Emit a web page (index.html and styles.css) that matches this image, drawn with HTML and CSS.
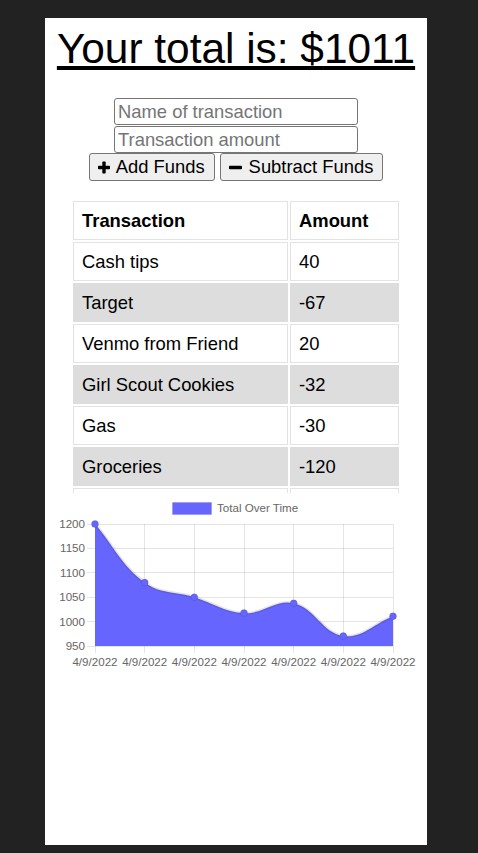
FILE: index.html
```html
<!DOCTYPE html>
<html lang="en">
<head>
<meta charset="utf-8">
<title>Budget Tracker</title>
<link rel="stylesheet" href="styles.css">
</head>
<body>
<main class="panel">
  <h1 class="total">Your total is: $<span id="total">1011</span></h1>

  <form class="form" onsubmit="return false">
    <input class="field" type="text" placeholder="Name of transaction">
    <input class="field field-amount" type="number" placeholder="Transaction amount">
    <div class="actions">
      <button class="btn" type="button">
        <svg class="icon icon-plus" viewBox="0 0 12 13" aria-hidden="true"><path d="M4.3 1.2a.8.8 0 0 1 .8-.8h1.8a.8.8 0 0 1 .8.8v3.6h3.5a.8.8 0 0 1 .8.8v1.8a.8.8 0 0 1-.8.8H7.7v3.6a.8.8 0 0 1-.8.8H5.1a.8.8 0 0 1-.8-.8V8.2H.8A.8.8 0 0 1 0 7.4V5.6a.8.8 0 0 1 .8-.8h3.5z"/></svg>
        <span>Add Funds</span>
      </button>
      <button class="btn" type="button">
        <svg class="icon icon-minus" viewBox="0 0 13 13" aria-hidden="true"><rect x="0" y="4.7" width="13" height="3.6" rx="0.8"/></svg>
        <span>Subtract Funds</span>
      </button>
    </div>
  </form>

  <div class="table-wrap">
    <table class="ledger">
      <thead>
        <tr><th class="col-name">Transaction</th><th>Amount</th></tr>
      </thead>
      <tbody>
        <tr><td>Cash tips</td><td>40</td></tr>
        <tr><td>Target</td><td>-67</td></tr>
        <tr><td>Venmo from Friend</td><td>20</td></tr>
        <tr><td>Girl Scout Cookies</td><td>-32</td></tr>
        <tr><td>Gas</td><td>-30</td></tr>
        <tr><td>Groceries</td><td>-120</td></tr>
        <tr><td>&nbsp;</td><td>&nbsp;</td></tr>
      </tbody>
    </table>
  </div>

  <svg class="chart" width="382" height="190" viewBox="45 493 382 190" aria-label="Total Over Time chart">
    <g class="legend">
      <rect x="172.5" y="502.5" width="39" height="12" fill="#6666ff" stroke="rgba(0,0,0,0.1)"/>
      <text x="217" y="511.5" class="chart-text">Total Over Time</text>
    </g>
    <g class="grid" stroke="rgba(0,0,0,0.1)" stroke-width="1" shape-rendering="crispEdges">
      <line x1="87" y1="524.5" x2="393" y2="524.5"/>
      <line x1="87" y1="548.5" x2="393" y2="548.5"/>
      <line x1="87" y1="572.5" x2="393" y2="572.5"/>
      <line x1="87" y1="597.5" x2="393" y2="597.5"/>
      <line x1="87" y1="621.5" x2="393" y2="621.5"/>
      <line x1="87" y1="646.5" x2="393" y2="646.5"/>
      <line x1="95.5" y1="524" x2="95.5" y2="653"/>
      <line x1="144.5" y1="524" x2="144.5" y2="653"/>
      <line x1="194.5" y1="524" x2="194.5" y2="653"/>
      <line x1="244.5" y1="524" x2="244.5" y2="653"/>
      <line x1="293.5" y1="524" x2="293.5" y2="653"/>
      <line x1="343.5" y1="524" x2="343.5" y2="653"/>
      <line x1="393.5" y1="524" x2="393.5" y2="653"/>
    </g>
    <path class="area" d="M95,524 C114.9,547.4 121.0,565.1 144.7,582.6 C160.7,594.4 174.5,591.1 194.3,597.2 C214.3,603.4 223.8,612.0 244,613.1 C263.6,614.3 275.4,599.1 293.7,603.3 C315.1,608.2 322.4,633.3 343.3,636 C362.2,638.5 373.1,624.2 393,616.2 L393,646 L95,646 Z" fill="#6666ff"/>
    <path class="line" d="M95,524 C114.9,547.4 121.0,565.1 144.7,582.6 C160.7,594.4 174.5,591.1 194.3,597.2 C214.3,603.4 223.8,612.0 244,613.1 C263.6,614.3 275.4,599.1 293.7,603.3 C315.1,608.2 322.4,633.3 343.3,636 C362.2,638.5 373.1,624.2 393,616.2" fill="none" stroke="rgba(0,0,0,0.1)" stroke-width="3"/>
    <g class="points" fill="#6666ff" stroke="rgba(0,0,0,0.1)" stroke-width="1">
      <circle cx="95" cy="524" r="3.5"/>
      <circle cx="144.7" cy="582.6" r="3.5"/>
      <circle cx="194.3" cy="597.2" r="3.5"/>
      <circle cx="244" cy="613.1" r="3.5"/>
      <circle cx="293.7" cy="603.3" r="3.5"/>
      <circle cx="343.3" cy="636" r="3.5"/>
      <circle cx="393" cy="616.2" r="3.5"/>
    </g>
    <g class="chart-text y-labels" text-anchor="end">
      <text x="85" y="528">1200</text>
      <text x="85" y="552.4">1150</text>
      <text x="85" y="576.8">1100</text>
      <text x="85" y="601.2">1050</text>
      <text x="85" y="625.6">1000</text>
      <text x="85" y="650">950</text>
    </g>
    <g class="chart-text x-labels" text-anchor="middle">
      <text x="95" y="666">4/9/2022</text>
      <text x="144.7" y="666">4/9/2022</text>
      <text x="194.3" y="666">4/9/2022</text>
      <text x="244" y="666">4/9/2022</text>
      <text x="293.7" y="666">4/9/2022</text>
      <text x="343.3" y="666">4/9/2022</text>
      <text x="393" y="666">4/9/2022</text>
    </g>
  </svg>
</main>
</body>
</html>
```

FILE: styles.css
```css
html, body {
  margin: 0;
  padding: 0;
}

body {
  background: #222222;
  font-family: "Liberation Sans", Arial, sans-serif;
  color: #000;
  min-height: 853px;
}

.panel {
  box-sizing: border-box;
  width: 382px;
  height: 827px;
  margin: 18px 0 0 45px;
  padding-top: 7px;
  background: #fff;
  display: flex;
  flex-direction: column;
  align-items: center;
}

.total {
  margin: 0;
  font-size: 42.4px;
  line-height: 48px;
  font-weight: normal;
  text-decoration: underline;
  white-space: nowrap;
}

.form {
  margin-top: 25px;
  display: flex;
  flex-direction: column;
  align-items: center;
}

.field {
  box-sizing: border-box;
  width: 244px;
  height: 27px;
  margin: 0;
  padding: 1px 3px;
  border: 1px solid #767676;
  border-radius: 3px;
  font-family: "Liberation Sans", Arial, sans-serif;
  font-size: 18.4px;
  color: #000;
  background: #fff;
  -moz-appearance: textfield;
}

.field-amount {
  margin-top: 1px;
}

.field::-webkit-outer-spin-button,
.field::-webkit-inner-spin-button {
  -webkit-appearance: none;
  margin: 0;
}

.field::placeholder {
  color: #757575;
}

.actions {
  display: flex;
  gap: 5px;
}

.btn {
  box-sizing: border-box;
  height: 28px;
  margin: 0;
  padding: 0 9px 0 8px;
  display: inline-flex;
  align-items: center;
  border: 1px solid #767676;
  border-radius: 3px;
  background: #efefef;
  font-family: "Liberation Sans", Arial, sans-serif;
  font-size: 18.4px;
  color: #000;
}

.icon {
  display: block;
  fill: #000;
}

.icon-plus {
  width: 12px;
  height: 13px;
  margin-right: 6px;
}

.icon-minus {
  width: 13px;
  height: 13px;
  margin-right: 7px;
}

.table-wrap {
  margin-top: 18px;
  width: 330px;
  height: 294px;
  overflow: hidden;
}

.ledger {
  width: 330px;
  border-collapse: separate;
  border-spacing: 2px;
  font-size: 18.4px;
  table-layout: fixed;
}

.ledger th,
.ledger td {
  padding: 8px;
  line-height: 21px;
  border: 1px solid #e3e3e3;
  text-align: left;
  white-space: nowrap;
}

.ledger th {
  font-weight: bold;
}

.col-name {
  width: 197px;
}

.ledger tbody tr:nth-child(even) td {
  background: #dddddd;
  border-color: #dddddd;
}

.chart {
  display: block;
  flex: none;
}

.chart-text,
.chart-text text {
  font-family: "Liberation Sans", Arial, sans-serif;
  font-size: 11.6px;
  fill: #666;
}
```
